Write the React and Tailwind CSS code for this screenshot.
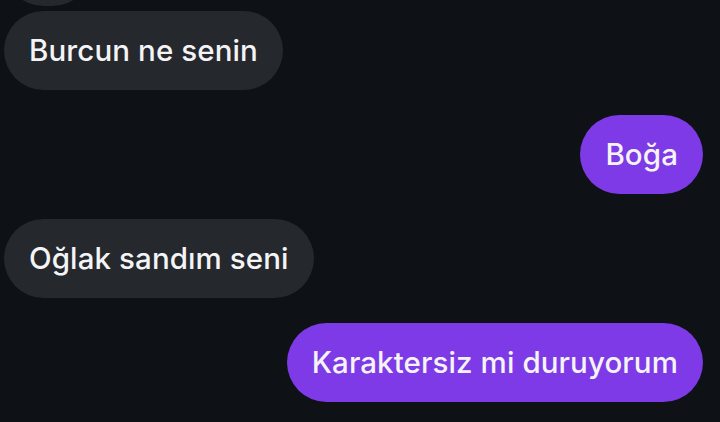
export default function App() {
  const msgs = [
    { t: "Burcun ne senin", me: false, gap: "mt-[5px]" },
    { t: "Boğa", me: true, gap: "mt-[25px]" },
    { t: "Oğlak sandım seni", me: false, gap: "mt-[25px]" },
    { t: "Karaktersiz mi duruyorum", me: true, gap: "mt-[25px]" },
  ];
  return (
    <div
      className="w-[720px] h-[422px] overflow-hidden bg-[#0e1116] px-[4px] flex flex-col"
      style={{ fontFamily: "Inter, 'Noto Sans', sans-serif" }}
    >
      <div className="self-start -mt-[73px] h-[79px] w-[88px] rounded-full bg-[#25282d]" />
      {msgs.map((m, i) => (
        <div
          key={i}
          className={`${m.gap} ${m.me ? "self-end mr-[13px] bg-[#7e3ae6]" : "self-start bg-[#25282d]"} rounded-full px-[25px] py-[22px] text-[29.5px] leading-[35px] font-medium tracking-[0.1px] text-[#f4f4f6]`}
        >
          {m.t}
        </div>
      ))}
    </div>
  );
}
